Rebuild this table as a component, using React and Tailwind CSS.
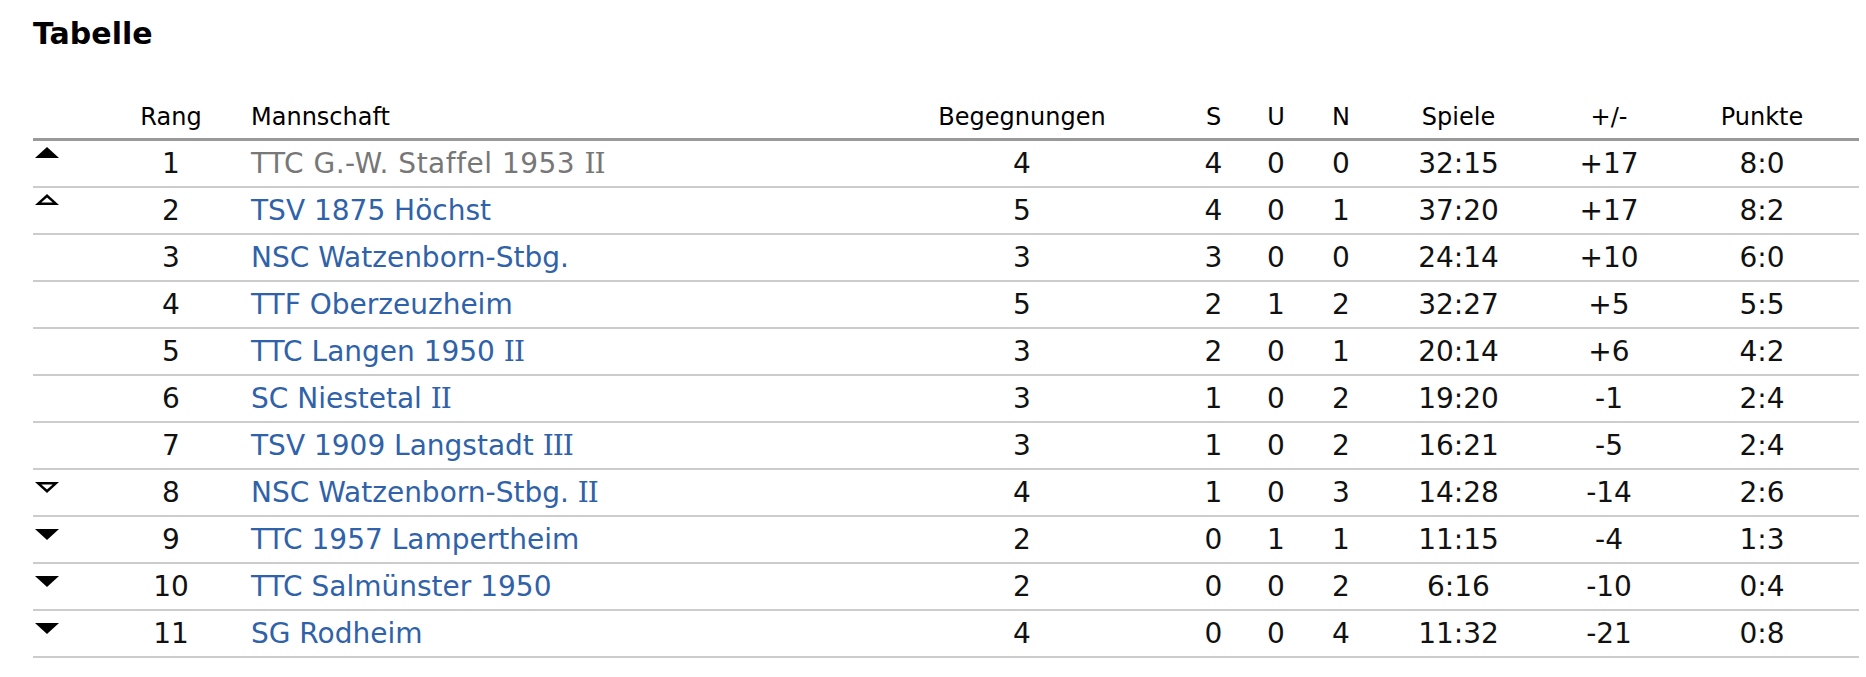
import React from "react";

const rows = [
  { a: "upF", r: 1, t: "TTC G.-W. Staffel 1953 II", gray: true, b: 4, s: 4, u: 0, n: 0, sp: "32:15", d: "+17", p: "8:0" },
  { a: "upH", r: 2, t: "TSV 1875 Höchst", b: 5, s: 4, u: 0, n: 1, sp: "37:20", d: "+17", p: "8:2" },
  { a: null, r: 3, t: "NSC Watzenborn-Stbg.", b: 3, s: 3, u: 0, n: 0, sp: "24:14", d: "+10", p: "6:0" },
  { a: null, r: 4, t: "TTF Oberzeuzheim", b: 5, s: 2, u: 1, n: 2, sp: "32:27", d: "+5", p: "5:5" },
  { a: null, r: 5, t: "TTC Langen 1950 II", b: 3, s: 2, u: 0, n: 1, sp: "20:14", d: "+6", p: "4:2" },
  { a: null, r: 6, t: "SC Niestetal II", b: 3, s: 1, u: 0, n: 2, sp: "19:20", d: "-1", p: "2:4" },
  { a: null, r: 7, t: "TSV 1909 Langstadt III", b: 3, s: 1, u: 0, n: 2, sp: "16:21", d: "-5", p: "2:4" },
  { a: "downH", r: 8, t: "NSC Watzenborn-Stbg. II", b: 4, s: 1, u: 0, n: 3, sp: "14:28", d: "-14", p: "2:6" },
  { a: "downF", r: 9, t: "TTC 1957 Lampertheim", b: 2, s: 0, u: 1, n: 1, sp: "11:15", d: "-4", p: "1:3" },
  { a: "downF", r: 10, t: "TTC Salmünster 1950", b: 2, s: 0, u: 0, n: 2, sp: "6:16", d: "-10", p: "0:4" },
  { a: "downF", r: 11, t: "SG Rodheim", b: 4, s: 0, u: 0, n: 4, sp: "11:32", d: "-21", p: "0:8" },
];

function Arrow({ kind }) {
  if (!kind) return null;
  const up = kind.startsWith("up");
  const hollow = kind.endsWith("H");
  const outer = up ? "0,11 12,0 24,11" : "0,0 12,11 24,0";
  const inner = up ? "6.3,8.6 12,3.6 17.7,8.6" : "6.3,2.4 12,7.4 17.7,2.4";
  return (
    <svg width="24" height="11" viewBox="0 0 24 11" className="block">
      <polygon points={outer} fill="#000" />
      {hollow && <polygon points={inner} fill="#fff" />}
    </svg>
  );
}

function Name({ text }) {
  const parts = text.split(/(\bI+\b)/);
  return (
    <>
      {parts.map((p, i) =>
        /^I+$/.test(p) ? (
          <span key={i} className="font-['DejaVu_Serif',serif] tracking-[-1px]">
            {p}
          </span>
        ) : (
          <span key={i}>{p}</span>
        )
      )}
    </>
  );
}

const grid =
  "grid grid-cols-[77px_122px_631px_318px_65px_60px_70px_165px_136px_170px_12px]";

export default function App() {
  return (
    <div className="bg-white w-[1866px] h-[677px] font-['DejaVu_Sans',sans-serif] text-[#111]">
      <div className="pt-[19px] pl-[33px] text-[30px] leading-none font-bold text-black">Tabelle</div>
      <div className="ml-[33px] w-[1826px]">
        <div className={`${grid} h-[92px] items-end pb-[9px] border-b-[3px] border-[#999] text-[24px] leading-none text-black`}>
          <div></div>
          <div className="text-center">Rang</div>
          <div className="pl-[19px]">Mannschaft</div>
          <div className="text-center">Begegnungen</div>
          <div className="text-center">S</div>
          <div className="text-center">U</div>
          <div className="text-center">N</div>
          <div className="text-center">Spiele</div>
          <div className="text-center">+/-</div>
          <div className="text-center">Punkte</div>
          <div></div>
        </div>
        {rows.map((r) => (
          <div
            key={r.r}
            className={`${grid} h-[47px] items-center border-b-2 border-[#ccc] text-[28px] leading-none`}
          >
            <div className={`self-start pl-[2px] ${r.a && r.a.startsWith("up") ? "pt-[6px]" : "pt-[12px]"}`}>
              <Arrow kind={r.a} />
            </div>
            <div className="text-center">{r.r}</div>
            <div
              className={`pl-[19px] whitespace-nowrap ${r.gray ? "text-[#777] tracking-[0.5px]" : "text-[#2f62a8]"}`}
            >
              <Name text={r.t} />
            </div>
            <div className="text-center">{r.b}</div>
            <div className="text-center">{r.s}</div>
            <div className="text-center">{r.u}</div>
            <div className="text-center">{r.n}</div>
            <div className="text-center">{r.sp}</div>
            <div className="text-center">{r.d}</div>
            <div className="text-center">{r.p}</div>
            <div></div>
          </div>
        ))}
      </div>
    </div>
  );
}
